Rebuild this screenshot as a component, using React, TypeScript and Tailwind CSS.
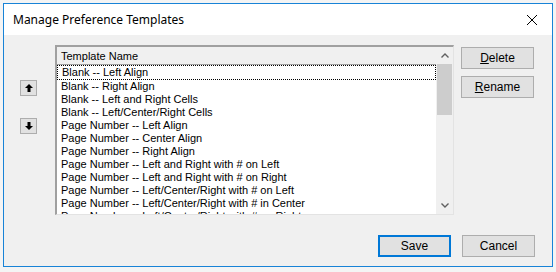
import React from "react";

const items = [
  "Blank -- Left Align",
  "Blank -- Right Align",
  "Blank -- Left and Right Cells",
  "Blank -- Left/Center/Right Cells",
  "Page Number -- Left Align",
  "Page Number -- Center Align",
  "Page Number -- Right Align",
  "Page Number -- Left and Right with # on Left",
  "Page Number -- Left and Right with # on Right",
  "Page Number -- Left/Center/Right with # on Left",
  "Page Number -- Left/Center/Right with # in Center",
  "Page Number -- Left/Center/Right with # on Right",
];

function Btn({ children, primary }: { children: React.ReactNode; primary?: boolean }) {
  return (
    <button
      type="button"
      className={
        "flex h-[22px] w-[73px] items-center justify-center bg-[#e1e1e1] text-[12px] text-black " +
        (primary ? "border-2 border-[#0078d7]" : "border border-[#adadad]")
      }
    >
      {children}
    </button>
  );
}

export default function App() {
  return (
    <div
      className="h-[272px] w-[556px] bg-[#f4f4f4] pl-[3px] pt-[3px]"
      style={{ fontFamily: '"Liberation Sans", Arial, sans-serif' }}
    >
      <div className="flex h-[264px] w-[550px] flex-col border border-[#1883d7] bg-[#f0f0f0]">
        <div className="flex h-[31px] items-center justify-between bg-white pl-[9px] pr-[14px]">
          <span className="text-[12px] text-black" style={{ fontFamily: '"Noto Sans", sans-serif' }}>
            Manage Preference Templates
          </span>
          <svg width="12" height="12" viewBox="0 0 12 12">
            <path d="M1 1L11 11M11 1L1 11" stroke="#000" strokeWidth="1" />
          </svg>
        </div>
        <div className="flex pl-[16px] pt-[10px]">
          <div className="flex w-[35px] flex-col pt-[35px]">
            <div className="flex h-[16px] w-[17px] items-center justify-center border border-[#adadad] bg-[#e1e1e1]">
              <svg width="10" height="10" viewBox="0 0 10 10">
                <path d="M5 1L1 5H3.5V9H6.5V5H9Z" fill="#000" />
              </svg>
            </div>
            <div className="mt-[22px] flex h-[16px] w-[17px] items-center justify-center border border-[#adadad] bg-[#e1e1e1]">
              <svg width="10" height="10" viewBox="0 0 10 10">
                <path d="M5 9L1 5H3.5V1H6.5V5H9Z" fill="#000" />
              </svg>
            </div>
          </div>
          <div className="flex h-[170px] w-[399px] border-l-2 border-t-2 border-b border-r border-l-[#a0a0a0] border-t-[#a0a0a0] border-b-[#e3e3e3] border-r-[#e3e3e3] bg-white">
            <div className="flex flex-1 flex-col overflow-hidden">
              <div className="h-[18px] shrink-0 border-b border-[#a0a0a0] bg-[#f0f0f0] pl-[4px] text-[11px] leading-[18px] text-black">
                Template Name
              </div>
              <div className="text-[11px] leading-[13px] text-black">
                {items.map((t, i) => (
                  <div
                    key={t}
                    className={
                      "whitespace-nowrap pl-[4px] " +
                      (i === 0 ? "border border-dotted border-black pl-[3px]" : "")
                    }
                  >
                    {t}
                  </div>
                ))}
              </div>
            </div>
            <div className="flex w-[17px] flex-col bg-[#f0f0f0]">
              <div className="flex h-[17px] items-center justify-center">
                <svg width="8" height="5" viewBox="0 0 8 5">
                  <path d="M0.5 4.5L4 1L7.5 4.5" stroke="#606060" strokeWidth="1.4" fill="none" />
                </svg>
              </div>
              <div className="mx-[1px] h-[51px] bg-[#cdcdcd]" />
              <div className="flex-1" />
              <div className="flex h-[17px] items-center justify-center">
                <svg width="8" height="5" viewBox="0 0 8 5">
                  <path d="M0.5 0.5L4 4L7.5 0.5" stroke="#606060" strokeWidth="1.4" fill="none" />
                </svg>
              </div>
            </div>
          </div>
          <div className="ml-[7px] flex flex-col gap-[7px] pt-[2px]">
            <Btn>
              <span><u>D</u>elete</span>
            </Btn>
            <Btn>
              <span><u>R</u>ename</span>
            </Btn>
          </div>
        </div>
        <div className="mt-[20px] flex justify-end gap-[11px] pr-[17px]">
          <Btn primary>Save</Btn>
          <Btn>Cancel</Btn>
        </div>
      </div>
    </div>
  );
}
